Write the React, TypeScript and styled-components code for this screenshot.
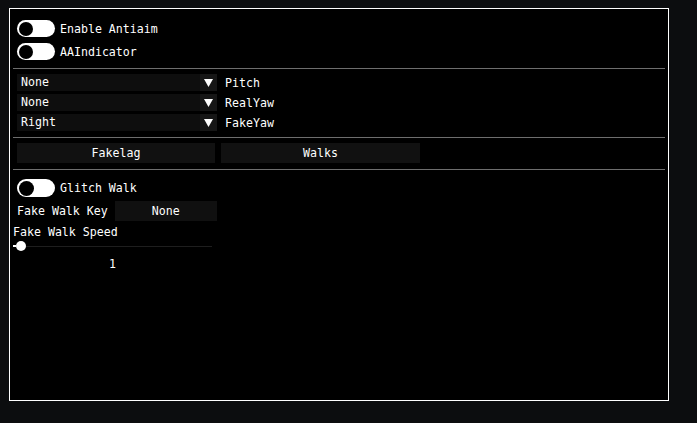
import React from "react";
import styled, { createGlobalStyle } from "styled-components";

const GlobalStyle = createGlobalStyle`
    html, body {
        margin: 0;
        padding: 0;
        background: #0c0d0f;
    }
    body {
        width: 697px;
        height: 423px;
        overflow: hidden;
        font-family: "DejaVu Sans Mono", "Liberation Mono", monospace;
        font-size: 11.6px;
        color: #ffffff;
    }
`;

const combos = [
    { value: "None", label: "Pitch" },
    { value: "None", label: "RealYaw" },
    { value: "Right", label: "FakeYaw" },
];

export default function App() {
    return (
        <>
            <GlobalStyle />
            <Screen>
                <Window>
                    <Check>
                        <Toggle><Knob /></Toggle>
                        <span>Enable Antiaim</span>
                    </Check>
                    <Check $gap={6}>
                        <Toggle><Knob /></Toggle>
                        <span>AAIndicator</span>
                    </Check>

                    <Separator $top={8} $bottom={5} />

                    <ComboList>
                        {combos.map((c) => (
                            <ComboRow key={c.label}>
                                <Combo>
                                    <ComboValue>{c.value}</ComboValue>
                                    <ArrowBox>
                                        <svg width="9" height="8" viewBox="0 0 9 8">
                                            <polygon points="0,0 9,0 4.5,8" fill="#fff" />
                                        </svg>
                                    </ArrowBox>
                                </Combo>
                                <span>{c.label}</span>
                            </ComboRow>
                        ))}
                    </ComboList>

                    <Separator $top={6} $bottom={5} />

                    <TabRow>
                        <TabButton $width={198}>Fakelag</TabButton>
                        <TabButton $width={199}>Walks</TabButton>
                    </TabRow>

                    <Separator $top={6} $bottom={9} />

                    <Check $height={18}>
                        <Toggle $height={18}><Knob $size={15} /></Toggle>
                        <span>Glitch Walk</span>
                    </Check>

                    <KeyRow>
                        <span>Fake Walk Key</span>
                        <KeyButton>None</KeyButton>
                    </KeyRow>

                    <SliderLabel>Fake Walk Speed</SliderLabel>
                    <Slider>
                        <Filled />
                        <Grab />
                        <Track />
                    </Slider>
                    <SliderValue>1</SliderValue>
                </Window>
            </Screen>
        </>
    );
}

const Screen = styled.div`
    width: 697px;
    height: 423px;
    padding: 8px 0 0 9px;
    box-sizing: border-box;
`;

const Window = styled.div`
    width: 660px;
    height: 393px;
    box-sizing: border-box;
    border: 1px solid #ffffff;
    background: #000000;
    padding: 11px 7px 0 7px;
    display: flex;
    flex-direction: column;
`;

const Check = styled.div<{ $gap?: number; $height?: number }>`
    display: flex;
    align-items: center;
    gap: 5px;
    height: ${(p) => p.$height ?? 17}px;
    margin-top: ${(p) => p.$gap ?? 0}px;
    white-space: pre;
`;

const Toggle = styled.div<{ $height?: number }>`
    width: 38px;
    height: ${(p) => p.$height ?? 17}px;
    border-radius: 9px;
    background: #ffffff;
    display: flex;
    align-items: center;
    padding: 0 1.5px;
    box-sizing: border-box;
`;

const Knob = styled.div<{ $size?: number }>`
    width: ${(p) => p.$size ?? 14}px;
    height: ${(p) => p.$size ?? 14}px;
    border-radius: 50%;
    background: #000000;
`;

const Separator = styled.div<{ $top: number; $bottom: number }>`
    height: 1px;
    background: #6e6e6e;
    margin: ${(p) => p.$top}px -4px ${(p) => p.$bottom}px -4px;
`;

const ComboList = styled.div`
    display: flex;
    flex-direction: column;
    gap: 3px;
`;

const ComboRow = styled.div`
    display: flex;
    align-items: center;
    gap: 8px;
    height: 17px;
`;

const Combo = styled.div`
    width: 200px;
    height: 17px;
    display: flex;
    background: #0e0e0e;
`;

const ComboValue = styled.div`
    flex: 1;
    padding-left: 4px;
    line-height: 17px;
`;

const ArrowBox = styled.div`
    width: 17px;
    height: 17px;
    background: #161616;
    display: flex;
    align-items: center;
    justify-content: center;
`;

const TabRow = styled.div`
    display: flex;
    gap: 6px;
`;

const TabButton = styled.div<{ $width: number }>`
    width: ${(p) => p.$width}px;
    height: 20px;
    background: #111111;
    display: flex;
    align-items: center;
    justify-content: center;
`;

const KeyRow = styled.div`
    display: flex;
    align-items: center;
    gap: 7px;
    height: 20px;
    margin-top: 4px;
    white-space: pre;
`;

const KeyButton = styled.div`
    width: 102px;
    height: 20px;
    background: #101010;
    display: flex;
    align-items: center;
    justify-content: center;
`;

const SliderLabel = styled.div`
    margin: 5px 0 0 -4px;
    height: 13px;
    line-height: 13px;
    white-space: pre;
`;

const Slider = styled.div`
    width: 199px;
    height: 10px;
    margin: 2px 0 0 -4px;
    display: flex;
    align-items: center;
`;

const Filled = styled.div`
    width: 3px;
    height: 2px;
    background: #ffffff;
`;

const Grab = styled.div`
    width: 10px;
    height: 10px;
    border-radius: 50%;
    background: #ffffff;
`;

const Track = styled.div`
    flex: 1;
    height: 1px;
    background: #1e1e1e;
`;

const SliderValue = styled.div`
    width: 199px;
    margin: 7px 0 0 -4px;
    text-align: center;
    line-height: 13px;
`;
